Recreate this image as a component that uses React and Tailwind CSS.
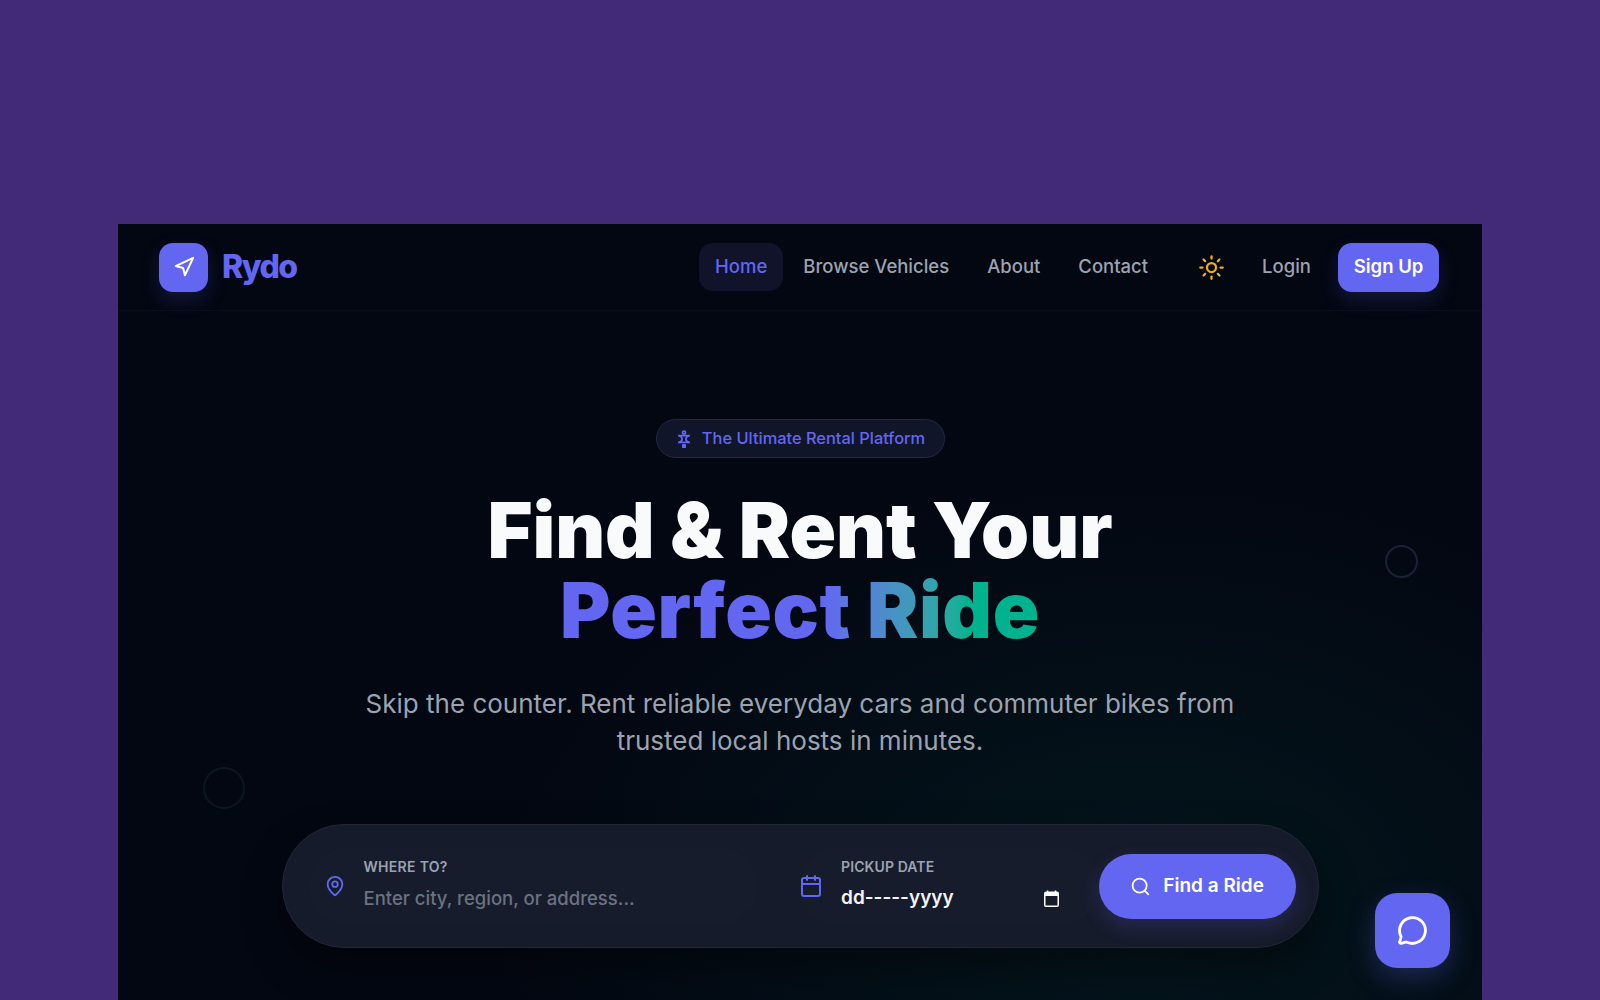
import React from "react";
import { Navigation, Sun, MapPin, Calendar, Search, MessageCircle } from "lucide-react";

function Sparkle() {
  return (
    <svg width="18" height="18" viewBox="0 0 24 24" fill="none" stroke="#6366f1" strokeWidth="2.400" strokeLinejoin="round" strokeLinecap="round">
      <circle cx="12" cy="3.500" r="2" />
      <path d="M5 7.500c3 1 4.500 2.500 4.500 4.500S8 15.500 5 16.500M19 7.500c-3 1-4.500 2.500-4.500 4.500s1.500 3.500 4.500 4.500M5 7.500h14M5 16.500h14" />
      <rect x="10.500" y="20" width="3" height="3" fill="#6366f1" />
    </svg>
  );
}

function PickerIcon() {
  return (
    <svg width="15" height="17" viewBox="0 0 15 17" fill="none">
      <path d="M3.500 0.500v2M11.500 0.500v2" stroke="#fff" strokeWidth="1.500" />
      <rect x="0.750" y="2.250" width="13.500" height="14" rx="1.200" stroke="#fff" strokeWidth="1.500" />
      <rect x="1" y="2.500" width="13" height="3.500" fill="#fff" />
    </svg>
  );
}

export default function App() {
  return (
    <div className="h-screen overflow-hidden bg-[#422a78] px-[118px] pt-[224px] font-['Inter',sans-serif]">
      <div className="relative h-[776px] overflow-hidden bg-[#030712]">
        <div className="absolute inset-0 bg-[radial-gradient(ellipse_at_75%_88%,rgba(0,90,75,0.18),transparent_45%)]" />
        <div className="absolute left-[85px] top-[543px] h-[42px] w-[42px] rounded-full border-2 border-[#0b1722]" />
        <div className="absolute left-[1267px] top-[321px] h-[33px] w-[33px] rounded-full border-2 border-[#1c2038]" />

        <nav className="relative flex h-[87px] items-center justify-between border-b border-[#0a0d19] pl-[41px] pr-[43px]">
          <div className="flex items-center gap-[14px]">
            <div className="flex h-[49px] w-[49px] items-center justify-center rounded-[14px] bg-[#6366f1] shadow-[0_8px_20px_rgba(99,102,241,0.18)]">
              <Navigation size={22} color="#ffffff" strokeWidth={2.200} />
            </div>
            <span className="text-[32px] font-extrabold tracking-[-1.500px] text-[#6366f1]">Rydo</span>
          </div>
          <div className="flex items-center">
            <a className="flex h-[48px] items-center rounded-[14px] bg-[#10132a] px-[16px] text-[18.500px] font-medium text-[#6366f1]">Home</a>
            <a className="ml-[4px] flex h-[48px] items-center px-[16px] text-[18.500px] font-medium text-[#9ca3af]">Browse Vehicles</a>
            <a className="ml-[6px] flex h-[48px] items-center px-[16px] text-[18.500px] font-medium text-[#9ca3af]">About</a>
            <a className="ml-[6px] flex h-[48px] items-center px-[16px] text-[18.500px] font-medium text-[#9ca3af]">Contact</a>
            <Sun size={27} color="#eab308" strokeWidth={2} className="ml-[34px]" />
            <a className="ml-[37px] text-[18.500px] font-medium text-[#9ca3af]">Login</a>
            <button className="ml-[27px] flex h-[49px] w-[101px] items-center justify-center rounded-[14px] bg-[#6366f1] text-[18.500px] font-semibold text-white shadow-[0_8px_20px_rgba(99,102,241,0.18)]">Sign Up</button>
          </div>
        </nav>

        <main className="relative flex flex-col items-center pt-[108px]">
          <div className="flex h-[39px] w-[289px] items-center justify-center gap-[9px] rounded-full border border-[#23283f] bg-[#11152a]">
            <Sparkle />
            <span className="text-[16.400px] font-medium text-[#6366f1]">The Ultimate Rental Platform</span>
          </div>
          <h1 className="mt-[32px] text-center text-[77px] font-black leading-[80px] tracking-[-0.050px] text-[#f9fafb]">
            Find &amp; Rent Your
            <br />
            <span className="bg-gradient-to-r from-[#6366f1] from-55% to-[#00b38f] to-85% bg-clip-text tracking-[0.600px] text-transparent">Perfect Ride</span>
          </h1>
          <p className="mt-[35px] w-[900px] text-center text-[26px] leading-[37px] text-[#9ca3af]">
            Skip the counter. Rent reliable everyday cars and commuter bikes from trusted local hosts in minutes.
          </p>

          <div className="mt-[65px] flex h-[124px] w-[1037px] items-center rounded-full border border-[#22263b] bg-[#161b2b] pl-[26px] pr-[22px] shadow-[0_20px_40px_rgba(0,0,0,0.4)]">
            <div className="flex h-[78px] w-[450px] items-center gap-[18px] rounded-[40px] bg-[#171c2d] pl-[15px]">
              <MapPin size={22} color="#6366f1" strokeWidth={2} />
              <div className="flex flex-col gap-[7px] pb-[4px]">
                <label className="text-[14px] font-semibold tracking-[0.300px] text-[#9ca3af]">WHERE TO?</label>
                <input placeholder="Enter city, region, or address..." className="h-[28px] w-[370px] bg-transparent text-[18.500px] font-medium text-white outline-none placeholder:text-[#6b7280]" />
              </div>
            </div>
            <div className="ml-[41px] flex h-[78px] w-[300px] items-center gap-[18px] rounded-[40px] bg-[#171c2d]">
              <Calendar size={24} color="#6366f1" strokeWidth={2} />
              <div className="flex flex-col gap-[7px] pb-[4px]">
                <label className="text-[14px] font-semibold tracking-[0.100px] text-[#9ca3af]">PICKUP DATE</label>
                <div className="flex h-[28px] w-[218px] items-center justify-between">
                  <span className="text-[19px] font-semibold text-[#f3f4f6]">dd-----yyyy</span>
                  <PickerIcon />
                </div>
              </div>
            </div>
            <button className="ml-auto flex h-[65px] w-[197px] items-center justify-center gap-[12px] rounded-full bg-[#6366f1] text-[19px] font-semibold text-white shadow-[0_8px_20px_rgba(99,102,241,0.2)]">
              <Search size={21} color="#ffffff" strokeWidth={2} />
              Find a Ride
            </button>
          </div>
        </main>

        <button className="absolute left-[1257px] top-[669px] flex h-[75px] w-[75px] items-center justify-center rounded-[22px] bg-[#6366f1] shadow-[0_10px_28px_rgba(99,102,241,0.28)]">
          <MessageCircle size={31} color="#ffffff" strokeWidth={2.200} />
        </button>
      </div>
    </div>
  );
}
